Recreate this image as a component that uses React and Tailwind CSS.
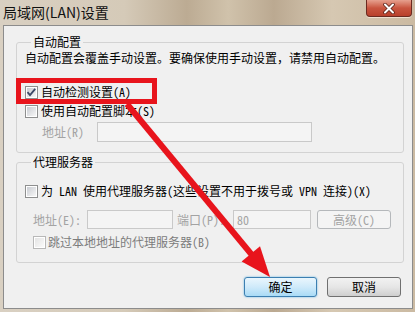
import React from "react";

function Box({ checked, disabled }) {
  return (
    <span
      className={
        disabled
          ? "w-[13px] h-[13px] shrink-0 border border-[#b8b8b8] bg-white flex items-center justify-center"
          : "w-[13px] h-[13px] shrink-0 border border-[#8e8f8f] bg-white flex items-center justify-center"
      }
    >
      <span
        className={
          disabled
            ? "w-[9px] h-[9px] bg-gradient-to-br from-[#e4e4e4] to-[#fafafa] flex items-center justify-center"
            : "w-[9px] h-[9px] bg-gradient-to-br from-[#c9ccd2] to-[#f7f7f7] flex items-center justify-center"
        }
      >
        {checked && (
          <svg width="11" height="11" viewBox="0 0 11 11" className="overflow-visible">
            <path d="M1.5 5.2 L4 8 L9.2 1.8" fill="none" stroke="#3a4766" strokeWidth="1.8" />
          </svg>
        )}
      </span>
    </span>
  );
}

function Field({ className, children }) {
  return <div className={className}>{children}</div>;
}

export default function App() {
  return (
    <div className="w-[415px] h-[312px] overflow-hidden relative bg-[linear-gradient(90deg,#d9d0c2_0%,#d5cab8_30%,#bcab93_45%,#d0c2ab_55%,#bba991_66%,#d6c8b2_80%,#cbbaa2_100%)] font-['Noto_Sans_CJK_SC','Noto_Sans',sans-serif] [font-feature-settings:'hwid'] text-black">
      {/* title bar */}
      <div className="h-[25px] flex items-start justify-between pl-[3px] pr-[3px]">
        <span className="mt-[4px] text-[14px] leading-[16px] [font-feature-settings:normal] text-[#111]">
          局域网(LAN)设置
        </span>
        <div className="w-[46px] h-[17px] rounded-b-[4px] border border-t-0 border-[#6b2a20] bg-gradient-to-b from-[#e6a08e] via-[#c9553f] to-[#b8402c] flex items-center justify-center shadow-[0_1px_0_#f0e0d0]">
          <svg width="12" height="11" viewBox="0 0 12 11">
            <path d="M2 1.5 L10 9.5 M10 1.5 L2 9.5" stroke="#5a2218" strokeWidth="3.6" strokeLinecap="round" />
            <path d="M2 1.5 L10 9.5 M10 1.5 L2 9.5" stroke="#ffffff" strokeWidth="2" strokeLinecap="round" />
          </svg>
        </div>
      </div>

      {/* body */}
      <div className="ml-[3px] mr-[2px] h-[284px] border border-[#8c8c8c] bg-[#f0f0f0] pt-[9px] pl-[12px] pr-[8px] flex flex-col text-[12px] leading-[14px]">
        <fieldset className="border border-[#d3d3d3] rounded-[3px] pl-[8px] pb-[10px]">
          <legend className="ml-[6px] px-[2px] text-[12px] leading-[14px]">自动配置</legend>
          <div className="mt-[2px] whitespace-nowrap [font-feature-settings:normal]">
            自动配置会覆盖手动设置。要确保使用手动设置，请禁用自动配置。
          </div>
          <div className="mt-[19px] h-[16px] flex items-center gap-[3px]">
            <Box checked />
            <span className="whitespace-nowrap">自动检测设置(A)</span>
          </div>
          <div className="mt-[3px] h-[16px] flex items-center gap-[3px]">
            <Box />
            <span className="whitespace-nowrap">使用自动配置脚本(S)</span>
          </div>
          <div className="mt-[3px] h-[20px] flex items-center">
            <span className="ml-[17px] w-[55px] text-[#a3a3a3] whitespace-nowrap">地址(R)</span>
            <Field className="w-[215px] h-[20px] border border-[#c9c9c9] bg-[#f4f4f4]" />
          </div>
        </fieldset>

        <fieldset className="mt-[2px] border border-[#d3d3d3] rounded-[3px] pl-[8px] pb-[12px]">
          <legend className="ml-[6px] px-[2px] text-[12px] leading-[14px]">代理服务器</legend>
          <div className="mt-[14px] h-[16px] flex items-center gap-[3px]">
            <Box />
            <span className="whitespace-nowrap">为 LAN 使用代理服务器(这些设置不用于拨号或 VPN 连接)(X)</span>
          </div>
          <div className="mt-[11px] h-[19px] flex items-center">
            <span className="ml-[8px] w-[54px] text-[#a3a3a3] whitespace-nowrap">地址(E):</span>
            <Field className="w-[86px] h-[19px] border border-[#c9c9c9] bg-[#f4f4f4]" />
            <span className="ml-[4px] w-[56px] text-[#a3a3a3] whitespace-nowrap">端口(P):</span>
            <Field className="w-[78px] h-[19px] border border-[#c9c9c9] bg-[#f4f4f4] pl-[3px] flex items-center text-[#a3a3a3]">
              80
            </Field>
            <div className="ml-[6px] w-[74px] h-[19px] border border-[#b5b8bb] rounded-[3px] bg-[#f4f4f4] flex items-center justify-center text-[#a3a3a3]">
              高级(C)
            </div>
          </div>
          <div className="mt-[5px] h-[16px] flex items-center gap-[2px] ml-[8px]">
            <Box disabled />
            <span className="whitespace-nowrap text-[#7c7c7c]">跳过本地地址的代理服务器(B)</span>
          </div>
        </fieldset>

        <div className="mt-[14px] flex justify-end gap-[10px] mr-[3px]">
          <div className="w-[73px] h-[20px] rounded-[3px] border border-[#3c7fb1] bg-gradient-to-b from-[#eaf6fd] via-[#cfeafa] to-[#a9dbf6] shadow-[0_0_2px_#5ab0e0] flex items-center justify-center">
            确定
          </div>
          <div className="w-[74px] h-[20px] rounded-[3px] border border-[#707070] bg-gradient-to-b from-[#f2f2f2] via-[#e6e6e6] to-[#cfcfcf] flex items-center justify-center">
            取消
          </div>
        </div>
      </div>

      {/* annotation overlays */}
      <div className="absolute left-[16px] top-[78px] w-[141px] h-[26px] border-[5px] border-[#e8141c] pointer-events-none" />
      <svg className="absolute left-0 top-0 pointer-events-none" width="415" height="312" viewBox="0 0 415 312">
        <line x1="127" y1="104" x2="252" y2="255" stroke="#e8141c" strokeWidth="6" />
        <polygon points="270,277 241.6,261.6 260,246.2" fill="#e8141c" />
      </svg>
    </div>
  );
}
